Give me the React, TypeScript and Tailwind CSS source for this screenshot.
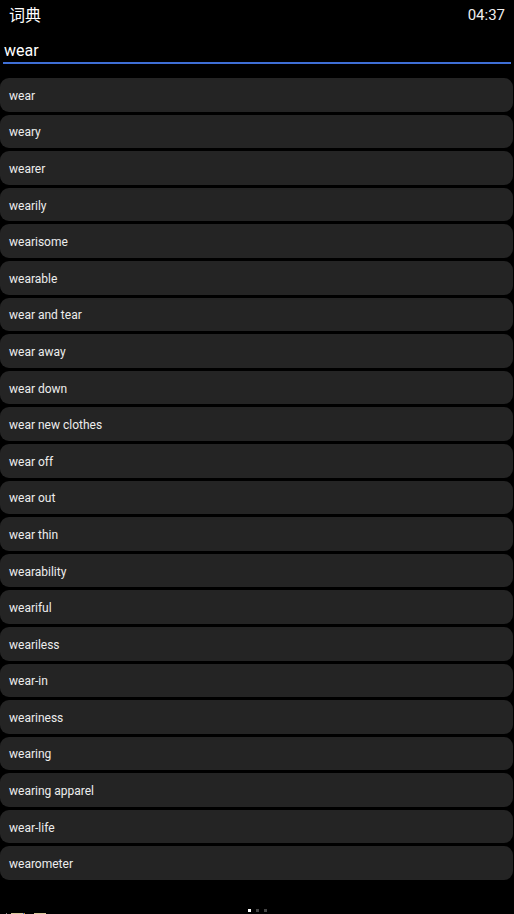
const words = [
  "wear",
  "weary",
  "wearer",
  "wearily",
  "wearisome",
  "wearable",
  "wear and tear",
  "wear away",
  "wear down",
  "wear new clothes",
  "wear off",
  "wear out",
  "wear thin",
  "wearability",
  "weariful",
  "weariless",
  "wear-in",
  "weariness",
  "wearing",
  "wearing apparel",
  "wear-life",
  "wearometer",
];

export default function App() {
  return (
    <div className="relative flex h-[914px] w-[514px] flex-col overflow-hidden bg-black font-['Roboto','Noto_Sans_CJK_SC',sans-serif] text-white">
      <header className="flex h-[31px] items-center justify-between pl-[9px] pr-[9px]">
        <span className="text-[16px] leading-none">词典</span>
        <span className="text-[15px] leading-none text-[#eeeeee]">04:37</span>
      </header>

      <div className="px-[3px]">
        <div className="flex h-[33px] items-end border-b-2 border-[#3f6fd6] pb-[3px] pl-[1px] text-[16px] leading-none text-white">
          wear
        </div>
      </div>

      <ul className="mt-[14px] flex flex-col gap-[3px] pr-[1px]">
        {words.map((w) => (
          <li
            key={w}
            className="flex h-[33.6px] items-center rounded-[9px] bg-[#242424] pl-[9px] pt-[2px] text-[12px] text-[#ededed]"
          >
            {w}
          </li>
        ))}
      </ul>

      <div className="absolute bottom-[2px] left-0 right-0 flex justify-center gap-[5px]">
        <span className="h-[3px] w-[3px] bg-white" />
        <span className="h-[3px] w-[3px] bg-[#444444]" />
        <span className="h-[3px] w-[3px] bg-[#444444]" />
      </div>

      <div className="absolute bottom-0 left-0 flex h-[1px] items-end">
        <span className="ml-[6px] h-[1px] w-[1px] bg-[#888888]" />
        <span className="ml-[4px] h-[1px] w-[12px] bg-[#d8c79a]" />
        <span className="h-[1px] w-[1px] bg-[#2d6fd0]" />
        <span className="h-[1px] w-[1px] bg-[#e0901f]" />
        <span className="ml-[9px] h-[1px] w-[12px] bg-[#d8c79a]" />
      </div>
    </div>
  );
}
